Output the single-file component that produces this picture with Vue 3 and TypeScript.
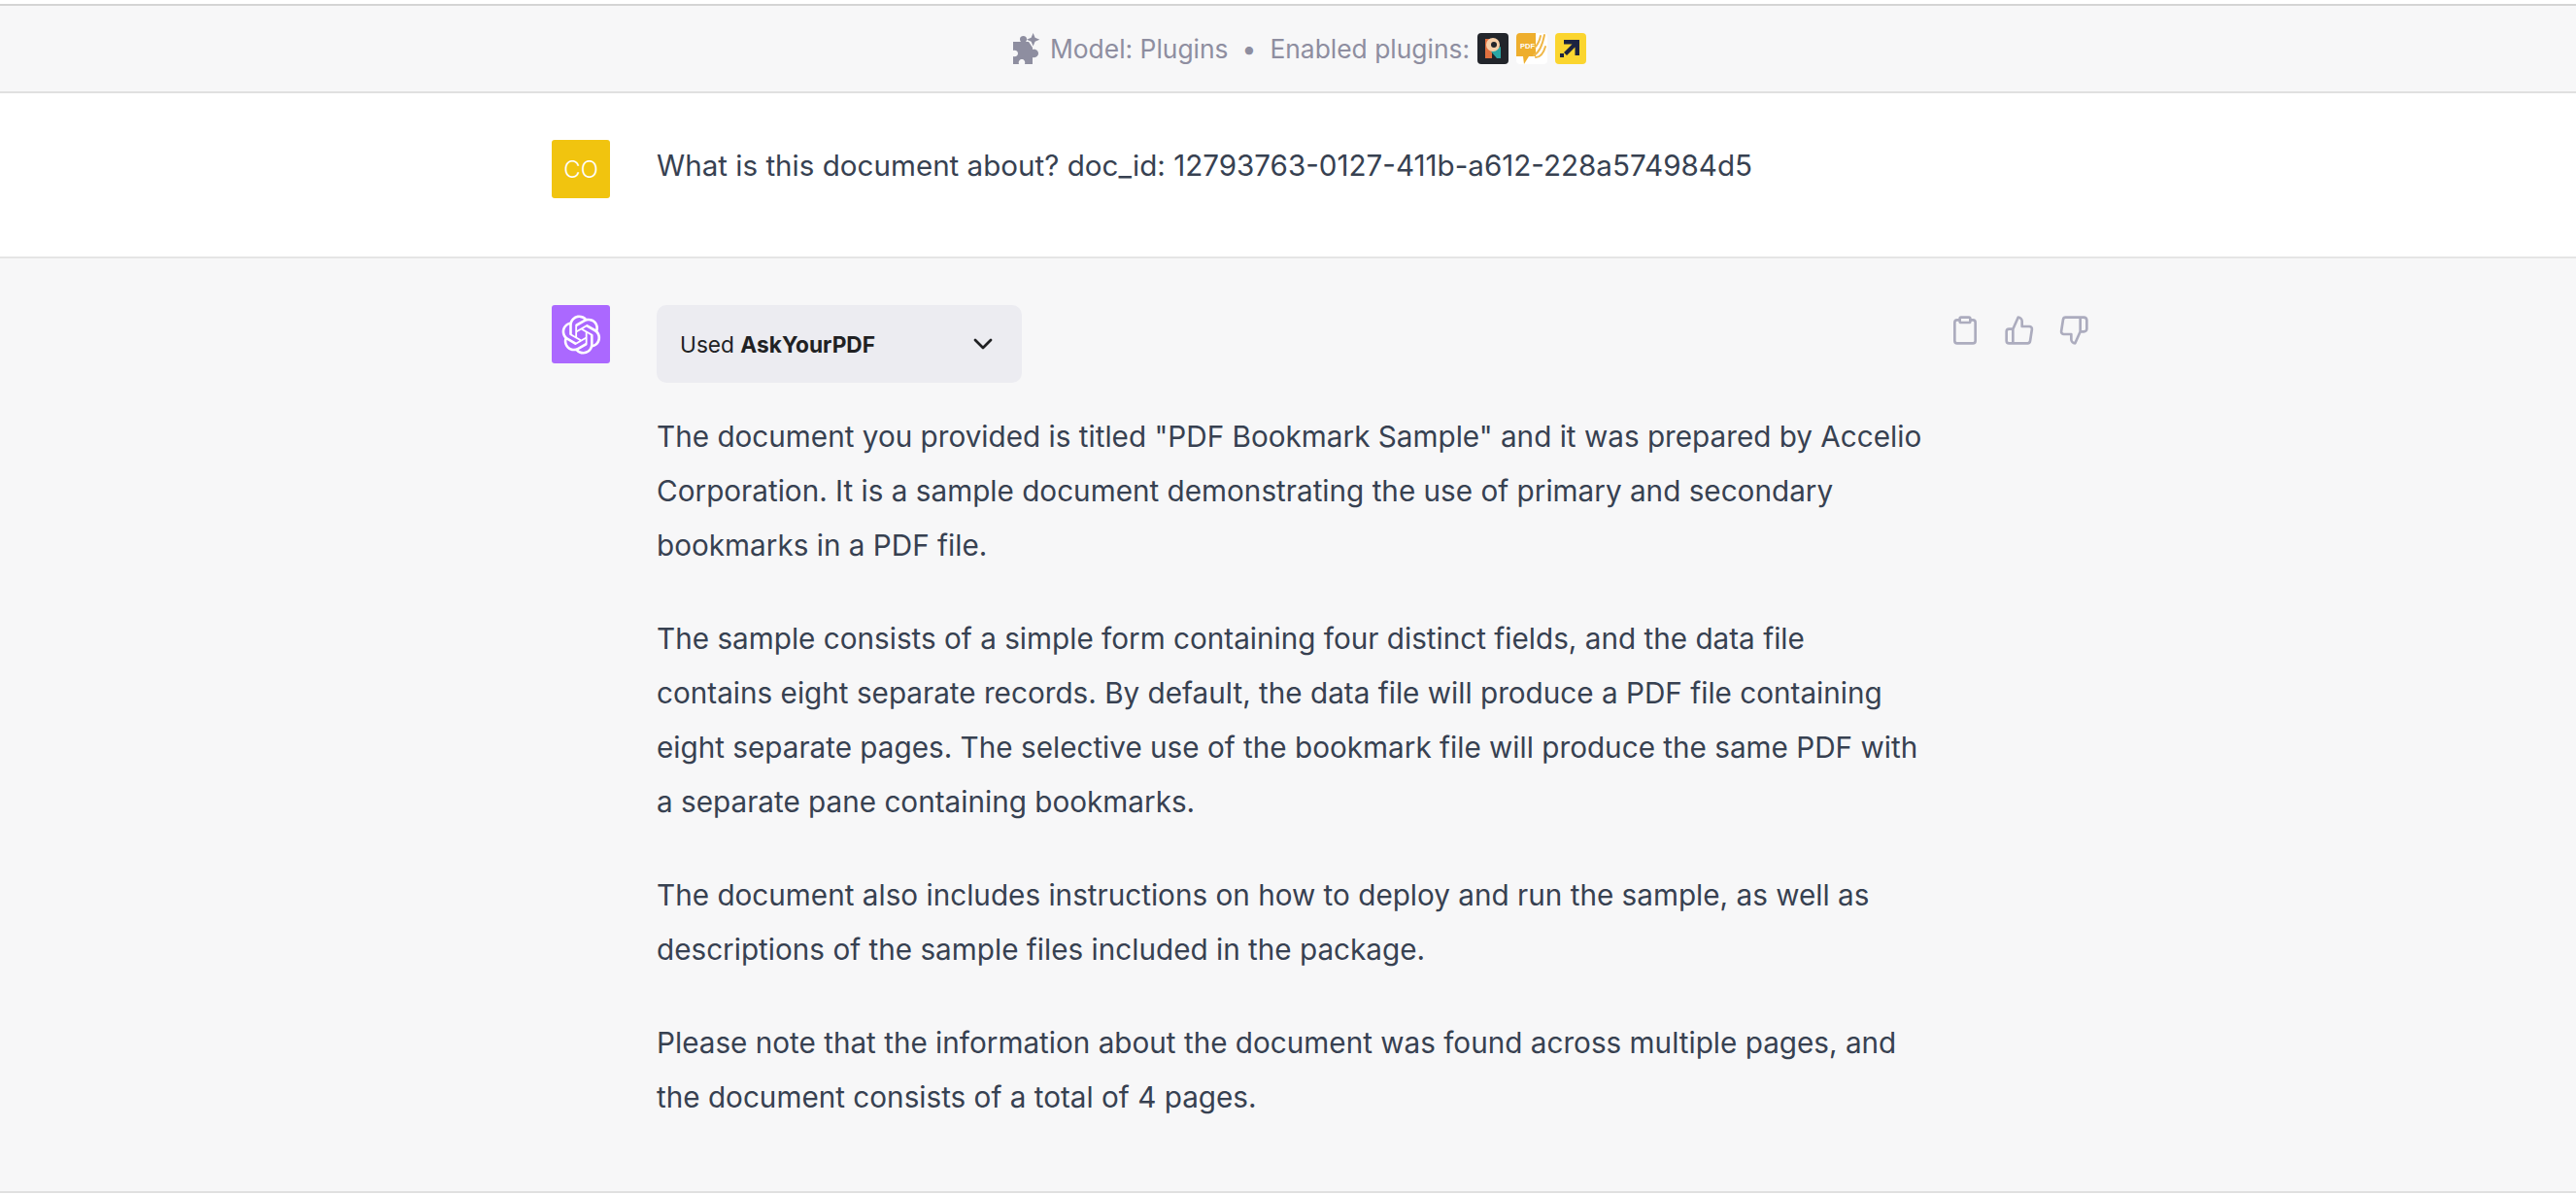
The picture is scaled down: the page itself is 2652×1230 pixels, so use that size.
<template>
  <div class="page">
    <div class="model-bar">
      <svg class="puzzle" viewBox="0 0 28 32" fill="#8e8ea0">
        <path d="M0 9h8c-1-1-1-2-1-3 0-4 7-4 7 0 0 1 0 2-1 3h3l4 6v2c4-1 6 2 6 4s-2 5-6 4v7h-8c1-3-1-5-3-5s-4 2-3 5H0v-8c3 1 5-1 5-3s-2-4-5-3z" />
        <path d="M20.600 0l2 4.700 4.700 2-4.700 2-2 4.700-2-4.700-4.700-2 4.700-2z" />
      </svg>
      <span>Model: Plugins</span>
      <span class="dot">•</span>
      <span>Enabled plugins:</span>
      <div class="plugins">
        <svg class="plugin" viewBox="0 0 32 32">
          <rect width="32" height="32" rx="4" fill="#22252b" />
          <path d="M8 6h7v20H8z" fill="#e0703f" />
          <path d="M14 19l10-5v12h-4z" fill="#2ba7a5" />
          <circle cx="16" cy="12" r="7" fill="#f6cfa8" />
          <circle cx="17" cy="12" r="3" fill="#22252b" />
        </svg>
        <svg class="plugin" viewBox="0 0 32 32">
          <rect width="32" height="32" rx="4" fill="#fff" />
          <path d="M0 4a4 4 0 0 1 4-4h16v24H13l-5 8-1-8H0z" fill="#eeae2d" />
          <g fill="none" stroke="#f0b84a" stroke-width="2" stroke-linecap="round">
            <path d="M18 23c6-3 9-11 11-21" />
            <path d="M19 15c3-3 5-7 6-12" />
            <path d="M20 25c4 0 8-4 10-11" />
          </g>
          <text x="4" y="16" class="pdf">PDF</text>
        </svg>
        <svg class="plugin" viewBox="0 0 32 32">
          <rect width="32" height="32" rx="4" fill="#fbd52f" />
          <path d="M9 7h16v16h-4.500v-8.500L12 23l-3-3 8.500-8.500H9z" fill="#1c2340" />
          <rect x="5" y="21" width="4" height="4" fill="#1c2340" />
        </svg>
      </div>
    </div>

    <div class="row user-row">
      <div class="avatar user-avatar">CO</div>
      <div class="body">
        <p class="question">What is this document about? doc_id: 12793763-0127-411b-a612-228a574984d5</p>
      </div>
    </div>

    <div class="row bot-row">
      <div class="avatar bot-avatar">
        <svg width="41" height="41" viewBox="0 0 41 41" fill="#fff">
          <path :d="logoPath" />
        </svg>
      </div>
      <div class="body">
        <div class="plugin-button">
          <span>Used <b>AskYourPDF</b></span>
          <svg width="32" height="32" viewBox="0 0 24 24" fill="none" stroke="#202123" stroke-width="2" stroke-linecap="round" stroke-linejoin="round">
            <path d="M6 9l6 6 6-6" />
          </svg>
        </div>
        <p v-for="(text, i) in paragraphs" :key="i" class="para">{{ text }}</p>
      </div>
      <div class="actions">
        <svg viewBox="0 0 24 24"><path d="M16 4h2a2 2 0 0 1 2 2v14a2 2 0 0 1-2 2H6a2 2 0 0 1-2-2V6a2 2 0 0 1 2-2h2" /><rect x="8" y="2" width="8" height="4" rx="1" /></svg>
        <svg viewBox="0 0 24 24"><path d="M14 9V5a3 3 0 0 0-3-3l-4 9v11h11.280a2 2 0 0 0 2-1.700l1.380-9a2 2 0 0 0-2-2.300zM7 22H4a2 2 0 0 1-2-2v-7a2 2 0 0 1 2-2h3" /></svg>
        <svg viewBox="0 0 24 24"><path d="M10 15v4a3 3 0 0 0 3 3l4-9V2H5.720a2 2 0 0 0-2 1.700l-1.380 9a2 2 0 0 0 2 2.300zm7-13h2.670A2.310 2.310 0 0 1 22 4v7a2.310 2.310 0 0 1-2.330 2H17" /></svg>
      </div>
    </div>
  </div>
</template>

<script setup lang="ts">
const paragraphs: string[] = [
  'The document you provided is titled "PDF Bookmark Sample" and it was prepared by Accelio Corporation. It is a sample document demonstrating the use of primary and secondary bookmarks in a PDF file.',
  'The sample consists of a simple form containing four distinct fields, and the data file contains eight separate records. By default, the data file will produce a PDF file containing eight separate pages. The selective use of the bookmark file will produce the same PDF with a separate pane containing bookmarks.',
  'The document also includes instructions on how to deploy and run the sample, as well as descriptions of the sample files included in the package.',
  'Please note that the information about the document was found across multiple pages, and the document consists of a total of 4 pages.',
]

const logoPath =
  'M37.5324 16.8707C37.9808 15.5241 38.1363 14.0974 37.9886 12.6859C37.8409 11.2744 37.3934 9.91076 36.676 8.68622C35.6126 6.83404 33.9882 5.3676 32.0373 4.4985C30.0864 3.62941 27.9098 3.40259 25.8215 3.85078C24.8796 2.7893 23.7219 1.94125 22.4257 1.36341C21.1295 0.785575 19.7249 0.491269 18.3058 0.500197C16.1708 0.495044 14.0893 1.16803 12.3614 2.42214C10.6335 3.67624 9.34853 5.44666 8.6917 7.47815C7.30085 7.76286 5.98686 8.3414 4.8377 9.17505C3.68854 10.0087 2.73073 11.0782 2.02839 12.312C0.956464 14.1591 0.498905 16.2988 0.721698 18.4228C0.944492 20.5467 1.83612 22.5449 3.268 24.1293C2.81966 25.4759 2.66413 26.9026 2.81182 28.3141C2.95951 29.7256 3.40701 31.0892 4.12437 32.3138C5.18791 34.1659 6.8123 35.6322 8.76321 36.5013C10.7141 37.3704 12.8907 37.5973 14.9789 37.1492C15.9208 38.2107 17.0786 39.0587 18.3747 39.6366C19.6709 40.2144 21.0755 40.5087 22.4946 40.4998C24.6307 40.5054 26.7133 39.8321 28.4418 38.5772C30.1704 37.3223 31.4556 35.5506 32.1119 33.5179C33.5027 33.2332 34.8167 32.6547 35.9659 31.821C37.115 30.9874 38.0728 29.9178 38.7752 28.684C39.8458 26.8371 40.3023 24.6979 40.0789 22.5748C39.8556 20.4517 38.9639 18.4544 37.5324 16.8707ZM22.4978 37.8849C20.7443 37.8874 19.0459 37.2733 17.6994 36.1501C17.7601 36.117 17.8666 36.0586 17.936 36.0161L25.9004 31.4156C26.1003 31.3019 26.2663 31.137 26.3813 30.9378C26.4964 30.7386 26.5563 30.5124 26.5549 30.2825V19.0542L29.9213 20.998C29.9389 21.0068 29.9541 21.0198 29.9656 21.0359C29.977 21.052 29.9842 21.0707 29.9867 21.0902V30.3889C29.9842 32.375 29.1946 34.2791 27.7909 35.6841C26.3872 37.0892 24.4838 37.8806 22.4978 37.8849ZM6.39227 31.0064C5.51397 29.4888 5.19742 27.7107 5.49804 25.9832C5.55718 26.0187 5.66048 26.0818 5.73461 26.1244L13.699 30.7248C13.8975 30.8408 14.1233 30.902 14.3532 30.902C14.583 30.902 14.8088 30.8408 15.0073 30.7248L24.731 25.1103V28.9979C24.7321 29.0177 24.7283 29.0376 24.7199 29.0556C24.7115 29.0736 24.6988 29.0893 24.6829 29.1012L16.6317 33.7497C14.9096 34.7416 12.8643 35.0097 10.9447 34.4954C9.02506 33.9811 7.38785 32.7263 6.39227 31.0064ZM4.29707 13.6194C5.17156 12.0998 6.55279 10.9364 8.19885 10.3327C8.19885 10.4013 8.19491 10.5228 8.19491 10.6071V19.808C8.19351 20.0378 8.25334 20.2638 8.36823 20.4629C8.48312 20.6619 8.64893 20.8267 8.84863 20.9404L18.5723 26.5542L15.206 28.4979C15.1894 28.5089 15.1703 28.5155 15.1505 28.5173C15.1307 28.5191 15.1107 28.516 15.0924 28.5082L7.04046 23.8557C5.32135 22.8601 4.06716 21.2235 3.55289 19.3046C3.03862 17.3858 3.30624 15.3413 4.29707 13.6194ZM31.955 20.0556L22.2312 14.4411L25.5976 12.4981C25.6142 12.4872 25.6333 12.4805 25.6531 12.4787C25.6729 12.4769 25.6928 12.4801 25.7111 12.4879L33.7631 17.1364C34.9967 17.849 36.0017 18.8982 36.6606 20.1613C37.3194 21.4244 37.6047 22.849 37.4832 24.2684C37.3617 25.6878 36.8382 27.0432 35.9743 28.1759C35.1103 29.3086 33.9415 30.1717 32.6047 30.6641C32.6047 30.5947 32.6047 30.4733 32.6047 30.3889V21.188C32.6066 20.9586 32.5474 20.7328 32.4332 20.5338C32.319 20.3348 32.154 20.1698 31.955 20.0556ZM35.3055 15.0128C35.2464 14.9765 35.1431 14.9142 35.069 14.8717L27.1045 10.2712C26.906 10.1554 26.6803 10.0943 26.4504 10.0943C26.2206 10.0943 25.9948 10.1554 25.7963 10.2712L16.0726 15.8858V11.9982C16.0715 11.9783 16.0753 11.9585 16.0837 11.9405C16.0921 11.9225 16.1048 11.9068 16.1207 11.8949L24.1719 7.25025C25.4053 6.53903 26.8158 6.19376 28.2383 6.25482C29.6608 6.31589 31.0364 6.78077 32.2044 7.59508C33.3723 8.40939 34.2842 9.53945 34.8334 10.8531C35.3826 12.1667 35.5464 13.6095 35.3055 15.0128ZM14.2424 21.9419L10.8752 19.9981C10.8576 19.9893 10.8423 19.9763 10.8309 19.9602C10.8195 19.9441 10.8122 19.9254 10.8098 19.9058V10.6071C10.8107 9.18295 11.2173 7.78848 11.9819 6.58696C12.7466 5.38544 13.8377 4.42659 15.1275 3.82264C16.4173 3.21869 17.8524 2.99464 19.2649 3.1767C20.6775 3.35876 22.0089 3.93941 23.1034 4.85067C23.0427 4.88379 22.937 4.94215 22.8668 4.98473L14.9024 9.58517C14.7025 9.69878 14.5366 9.86356 14.4215 10.0626C14.3065 10.2616 14.2466 10.4877 14.2479 10.7175L14.2424 21.9419ZM16.071 17.9991L20.4018 15.4978L24.7325 17.9975V22.9985L20.4018 25.4983L16.071 22.9985V17.9991Z'
</script>

<style>
html,
body {
  background: #fff;
}
</style>

<style scoped>
.page {
  height: 1230px;
  overflow: hidden;
  font-family: Inter, "Noto Sans", sans-serif;
  color: #374151;
  box-sizing: border-box;
  padding-top: 4px;
}

.model-bar {
  height: 92px;
  padding-left: 24px;
  display: flex;
  align-items: center;
  justify-content: center;
  background: #f7f7f8;
  border-top: 2px solid #d4d4d4;
  border-bottom: 2px solid #e0e0e0;
  box-sizing: border-box;
  color: #8e8ea0;
  font-size: 26.4px;
}

.puzzle {
  width: 28px;
  height: 32px;
  margin-right: 10px;
}

.dot {
  margin: 0 14px;
}

.plugins {
  display: flex;
  gap: 8px;
  margin-left: 8px;
}

.plugin {
  width: 32px;
  height: 32px;
  display: block;
}

.pdf {
  font-family: "Liberation Sans", sans-serif;
  font-size: 7.5px;
  font-weight: 700;
  fill: #fff;
}

.row {
  display: flex;
  padding-left: 568px;
  box-sizing: border-box;
}

.user-row {
  height: 170px;
  padding-top: 48px;
  background: #fff;
  border-bottom: 2px solid #e5e5e5;
}

.bot-row {
  height: 962px;
  padding-top: 48px;
  background: #f7f7f8;
  border-bottom: 2px solid #e0e0e0;
}

.avatar {
  width: 60px;
  height: 60px;
  flex: none;
  border-radius: 3px;
  display: flex;
  align-items: center;
  justify-content: center;
  color: #fff;
}

.user-avatar {
  background: #f1c40f;
  font-size: 24px;
  font-weight: 300;
}

.bot-avatar {
  background: #ab68ff;
}

.body {
  width: 1306px;
  margin-left: 48px;
  flex: none;
}

.question {
  margin: -2px 0 0;
  font-size: 29.6px;
  line-height: 56px;
}

.plugin-button {
  width: 376px;
  height: 80px;
  box-sizing: border-box;
  padding: 0 24px;
  border-radius: 10px;
  background: #ececf1;
  display: flex;
  align-items: center;
  justify-content: space-between;
  color: #202123;
  font-size: 22.7px;
}

.para {
  margin: 27px 0 40px;
  font-size: 29.7px;
  line-height: 56px;
}

.para + .para {
  margin-top: 0;
}

.actions {
  display: flex;
  gap: 24px;
  margin-left: 25px;
  padding-top: 10px;
}

.actions svg {
  width: 32px;
  height: 32px;
  fill: none;
  stroke: #acacbe;
  stroke-width: 2;
  stroke-linecap: round;
  stroke-linejoin: round;
}
</style>
